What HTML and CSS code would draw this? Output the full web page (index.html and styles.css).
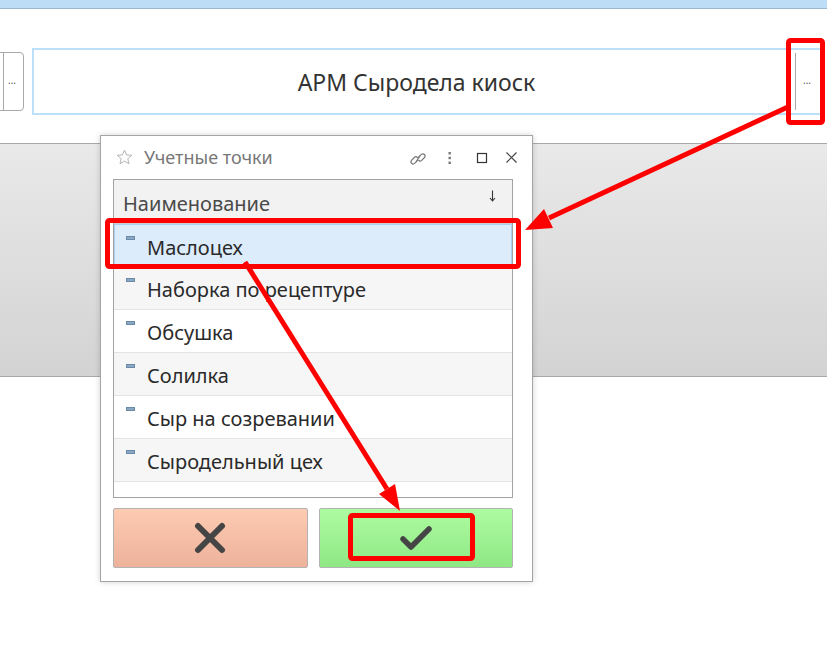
FILE: index.html
```html
<!DOCTYPE html>
<html lang="ru">
<head>
<meta charset="utf-8">
<link rel="stylesheet" href="styles.css">
</head>
<body>
<div class="topbar"></div>
<div class="fieldrow">
  <div class="leftbtn"><span class="vline"></span><span class="dots">...</span></div>
  <div class="field">
    <div class="ftext">АРМ Сыродела киоск</div>
    <div class="fbtn"><span class="vline"></span><span class="dots">...</span></div>
  </div>
</div>
<div class="panel"></div>

<div class="dialog">
  <div class="dhead">
    <svg class="star" width="17" height="16" viewBox="0 0 17 16"><path d="M8.5 1 L10.6 5.9 L15.8 6.3 L11.8 9.7 L13 14.8 L8.5 12.1 L4 14.8 L5.2 9.7 L1.2 6.3 L6.4 5.9 Z" fill="none" stroke="#b5b5b5" stroke-width="1"/></svg>
    <span class="dtitle">Учетные точки</span>
    <div class="dicons">
      <svg class="ic" width="16" height="18" viewBox="0 0 16 18"><g fill="none" stroke="#777" stroke-width="1.2" stroke-linecap="round"><path d="M7.2 10.8 L4.6 13.4 a2.2 2.2 0 0 1 -3.1 -3.1 L4.3 7.5 a2.2 2.2 0 0 1 3.1 0"/><path d="M8.6 7.2 L11.4 4.4 a2.2 2.2 0 0 1 3.1 3.1 L11.7 10.3 a2.2 2.2 0 0 1 -3.1 0"/><path d="M6.2 11.6 L9.8 6.2"/></g></svg>
      <svg class="ic" width="6" height="14" viewBox="0 0 6 14"><g fill="#777"><rect x="1.5" y="1" width="2.4" height="2.4"/><rect x="1.5" y="5.8" width="2.4" height="2.4"/><rect x="1.5" y="10.6" width="2.4" height="2.4"/></g></svg>
      <svg class="ic" width="12" height="12" viewBox="0 0 12 12"><rect x="1.5" y="1.5" width="9" height="9" fill="none" stroke="#333" stroke-width="1.2"/></svg>
      <svg class="ic" width="13" height="13" viewBox="0 0 13 13"><path d="M1.5 1.5 L11.5 11.5 M11.5 1.5 L1.5 11.5" stroke="#444" stroke-width="1.2"/></svg>
    </div>
  </div>
  <div class="table">
    <div class="thead"><span>Наименование</span><svg class="sort" width="7" height="12" viewBox="0 0 7 12"><path d="M3.5 0.5 V10.5 M1 8 L3.5 11 L6 8" fill="none" stroke="#333" stroke-width="1.1"/></svg></div>
    <div class="row sel"><span class="mk"></span><span class="rt">Маслоцех</span></div>
    <div class="row alt"><span class="mk"></span><span class="rt">Наборка по рецептуре</span></div>
    <div class="row"><span class="mk"></span><span class="rt">Обсушка</span></div>
    <div class="row alt"><span class="mk"></span><span class="rt">Солилка</span></div>
    <div class="row"><span class="mk"></span><span class="rt">Сыр на созревании</span></div>
    <div class="row alt"><span class="mk"></span><span class="rt">Сыродельный цех</span></div>
  </div>
  <div class="btns">
    <div class="btn cancel"><svg width="32" height="32" viewBox="0 0 32 32"><path d="M4 4 L28 28 M28 4 L4 28" stroke="#454545" stroke-width="6" stroke-linecap="round"/></svg></div>
    <div class="btn ok"><svg width="34" height="28" viewBox="0 0 34 28"><path d="M4 15 L12 23 L30 5" fill="none" stroke="#454545" stroke-width="5.5" stroke-linecap="round" stroke-linejoin="round"/></svg></div>
  </div>
</div>

<svg class="annot" width="827" height="662" viewBox="0 0 827 662">
  <g fill="none" stroke="#ff0000" stroke-width="5">
    <rect x="788.5" y="40.5" width="34" height="82" rx="2"/>
    <rect x="107.5" y="220.5" width="411" height="46" rx="2"/>
    <rect x="350.5" y="515.5" width="122" height="43" rx="2"/>
    <line x1="790" y1="106" x2="549" y2="218"/>
    <line x1="245" y1="262" x2="387" y2="489"/>
  </g>
  <g fill="#ff0000">
    <polygon points="525,230 553,228 544,209"/>
    <polygon points="400,511 379,494 395,484"/>
  </g>
</svg>
</body>
</html>
```
FILE: styles.css
```css
* { box-sizing: border-box; }
html, body { margin: 0; padding: 0; }
body {
  width: 827px;
  height: 662px;
  overflow: hidden;
  background: #fff;
  font-family: "Noto Sans", "Open Sans", sans-serif;
  color: #333;
  position: relative;
}
.topbar {
  height: 9px;
  background: #bddcf6;
  border-bottom: 1px solid #9db7cc;
}
.fieldrow {
  display: flex;
  align-items: center;
  margin-top: 39px;
  height: 67px;
}
.leftbtn {
  width: 25px;
  height: 59px;
  margin-left: -1px;
  border: 1px solid #a9a9a9;
  border-radius: 0 4px 4px 0;
  display: flex;
  align-items: center;
  gap: 4px;
  padding-left: 3px;
}
.vline {
  width: 1px;
  height: 57px;
  background: #a9a9a9;
}
.dots {
  font-size: 10px;
  color: #555;
  line-height: 1;
  margin-top: -3px;
}
.field {
  margin-left: 8px;
  width: 791px;
  height: 67px;
  border: 2px solid #bde0fa;
  display: flex;
  align-items: center;
}
.ftext {
  flex: 1;
  text-align: center;
  font-size: 23px;
  color: #333;
  padding-left: 5px;
}
.fbtn {
  width: 27px;
  height: 63px;
  display: flex;
  align-items: center;
  gap: 7px;
  padding-left: 1px;
}
.panel {
  margin-top: 28px;
  height: 234px;
  border-top: 1px solid #a9a9a9;
  border-bottom: 1px solid #a9a9a9;
  background: linear-gradient(#e9e9e9, #d3d3d3);
}
.dialog {
  position: absolute;
  left: 100px;
  top: 135px;
  width: 433px;
  height: 447px;
  background: #fff;
  border: 1px solid #a5a5a5;
  box-shadow: 0 0 6px rgba(0,0,0,0.18);
  padding: 0 19px 0 12px;
}
.dhead {
  height: 43px;
  display: flex;
  align-items: center;
  padding-left: 3px;
}
.star { margin-top: -1px; }
.dtitle {
  margin-left: 11px;
  font-size: 18px;
  color: #777;
  margin-top: -2px;
}
.dicons {
  margin-left: auto;
  display: flex;
  align-items: center;
  margin-right: -5px;
}
.dicons .ic:nth-child(1) { margin-right: 21px; margin-top: 2px; }
.dicons .ic:nth-child(2) { margin-right: 23px; }
.dicons .ic:nth-child(3) { margin-right: 17px; }
.table {
  width: 400px;
  height: 319px;
  border: 1px solid #a3a3a3;
  overflow: hidden;
}
.thead {
  height: 44px;
  background: #f2f2f2;
  border-bottom: 1px solid #cfcfcf;
  display: flex;
  align-items: center;
  padding: 4px 16px 0 9px;
  font-size: 20px;
  color: #4a4a4a;
}
.sort {
  margin-left: auto;
  margin-top: -16px;
}
.row {
  height: 43px;
  border-bottom: 1px solid #e3e3e3;
  display: flex;
  align-items: flex-start;
  padding-left: 12px;
  background: #fff;
}
.row.alt { background: #f6f6f6; }
.row.sel {
  background: #dcecfb;
  border: 1px solid #a9d0f2;
  padding-left: 11px;
}
.mk {
  width: 9px;
  height: 4px;
  margin-top: 11px;
  background: #8aa7c4;
  border: 1px solid #6b8aa8;
}
.rt {
  margin-left: 12px;
  margin-top: 9px;
  font-size: 20px;
  color: #2a2a2a;
}
.btns {
  width: 400px;
  display: flex;
  gap: 11px;
  margin-top: 10px;
}
.btn {
  flex: 1;
  height: 60px;
  border: 1px solid #b3b3b3;
  border-radius: 2px;
  display: flex;
  align-items: center;
  justify-content: center;
}
.cancel { background: linear-gradient(#fdcbb2, #eeb29b); }
.ok { background: linear-gradient(#adfba1, #8fe884); }
.annot {
  position: absolute;
  left: 0;
  top: 0;
  pointer-events: none;
}
```
